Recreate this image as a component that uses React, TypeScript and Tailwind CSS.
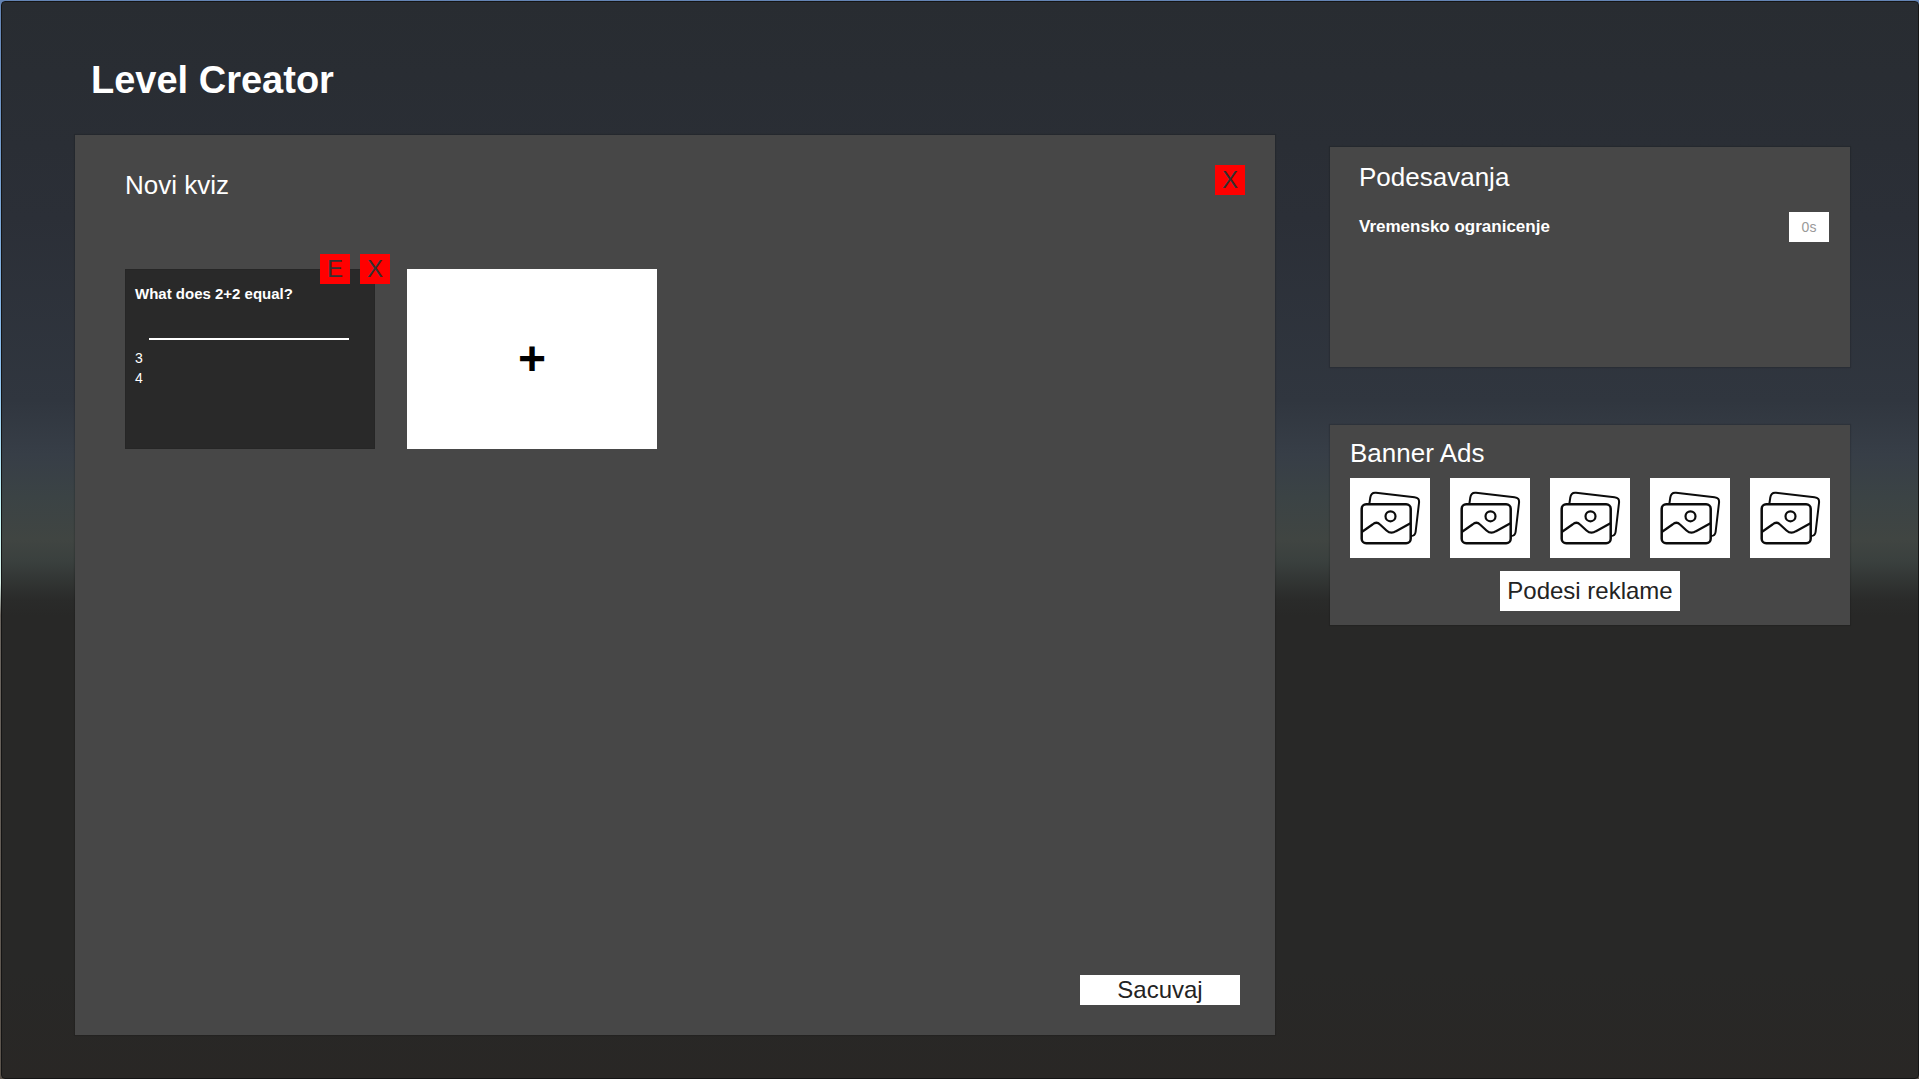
import { useState } from "react";

function GalleryIcon() {
  return (
    <svg viewBox="0 0 80 80" fill="none" stroke="#0c0c0c" strokeWidth="2" strokeLinecap="round" strokeLinejoin="round" className="size-full" aria-hidden="true">
      <path d="M19.4 25.5 20.3 19.5C20.8 16 22.500 14.300 26 14.700L64.500 19.200C68 19.600 69.500 21.500 69 25L65.600 54C65.200 57 63.500 58 61 58" />
      <rect x="11.700" y="26.200" width="49" height="39" rx="4.500" strokeWidth="2.500" />
      <circle cx="40.500" cy="38.300" r="5" strokeWidth="2.200" />
      <path d="M12.500 53.500 22.500 46.500Q26.500 43 30 46.500L36.500 52.500Q41 56.500 46 53.200L60 45.500" strokeWidth="2.200" />
    </svg>
  );
}

const redButton =
  "flex size-[30px] items-center justify-center bg-[#ff0000] text-2xl leading-none font-normal text-[#323232]";

export default function App() {
  const [limit, setLimit] = useState("");
  return (
    <div className="bg-[linear-gradient(180deg,#6484b4_0%,#8cc0f0_34%,#c8f8f8_48%,#d8f0e8_54%,#6c6660_57%,#5c544c_100%)] pt-px pl-px font-['Liberation_Sans',Arial,sans-serif]">
      <div className="flex min-h-[calc(100vh-1px)] flex-col rounded border border-[#151515] bg-[linear-gradient(180deg,#282c31_0%,#2b2f37_20%,#30363f_37%,#373e47_42%,#3b4345_46%,#404542_50%,#3a403e_52%,#2a2b2a_55.500%,#282827_57%,#282827_90%,#292725_100%)] pr-[68px] pb-[43px] pl-[73px]">
        <h1 className="mt-[58px] mb-[35px] pl-4 text-[38px] leading-10 font-bold text-white">Level Creator</h1>
        <div className="flex flex-1 items-start gap-[55px]">
          <main className="flex min-w-0 flex-1 flex-col self-stretch bg-[#474747] pt-[30px] pr-[30px] pb-[30px] pl-[50px] shadow-[0_0_1px_1px_rgba(0,0,0,0.12)]">
            <div className="flex items-start justify-between">
              <h2 className="mt-1 text-[26px] leading-[32px] text-white">Novi kviz</h2>
              <button type="button" aria-label="Zatvori" className={redButton}>X</button>
            </div>
            <div className="mt-[68px] flex flex-wrap gap-8">
              <article className="relative h-[180px] w-[250px] bg-[#292929] px-[10px] pt-4 text-white shadow-[inset_0_0_1px_#1c1c1c]">
                <h3 className="text-[15px] leading-[18px] font-bold">What does 2+2 equal?</h3>
                <div className="mt-[35px] mr-4 ml-[14px] h-[2px] bg-white" />
                <ul className="mt-2 text-sm leading-5">
                  <li>3</li>
                  <li>4</li>
                </ul>
                <div className="absolute -top-[15px] -right-[15px] flex gap-[10px]">
                  <button type="button" aria-label="Izmeni pitanje" className={redButton}>E</button>
                  <button type="button" aria-label="Obrisi pitanje" className={redButton}>X</button>
                </div>
              </article>
              <button type="button" aria-label="Dodaj pitanje" className="h-[180px] w-[250px] bg-white text-5xl font-bold text-black">+</button>
            </div>
            <button type="button" className="mt-auto mr-[5px] h-[30px] w-40 self-end bg-white text-2xl leading-none text-[#232323]">Sacuvaj</button>
          </main>
          <aside className="mt-3 flex w-[520px] flex-col gap-[58px] text-white">
            <section className="min-h-[220px] bg-[#474747] pt-[14px] pr-[21px] pl-[29px] shadow-[0_0_1px_1px_rgba(0,0,0,0.12)]">
              <h2 className="text-[26px] leading-[32px]">Podesavanja</h2>
              <div className="mt-[19px] flex items-center justify-between">
                <label htmlFor="limit" className="text-[17px] leading-6 font-bold">Vremensko ogranicenje</label>
                <input id="limit" value={limit} onChange={(e) => setLimit(e.target.value)} placeholder="0s" className="h-[30px] w-10 bg-white text-center text-sm text-[#323232] placeholder:text-[#999]" />
              </div>
            </section>
            <section className="flex min-h-[200px] flex-col bg-[#474747] px-5 pt-3 pb-[14px] shadow-[0_0_1px_1px_rgba(0,0,0,0.12)]">
              <h2 className="text-[26px] leading-[32px]">Banner Ads</h2>
              <div className="mt-[9px] flex justify-between">
                {[1, 2, 3, 4, 5].map((n) => (
                  <button key={n} type="button" aria-label={`Banner ${n}`} className="size-20 bg-white">
                    <GalleryIcon />
                  </button>
                ))}
              </div>
              <button type="button" className="mt-[13px] h-10 w-[180px] self-center bg-white text-2xl text-[#232323]">Podesi reklame</button>
            </section>
          </aside>
        </div>
      </div>
    </div>
  );
}
